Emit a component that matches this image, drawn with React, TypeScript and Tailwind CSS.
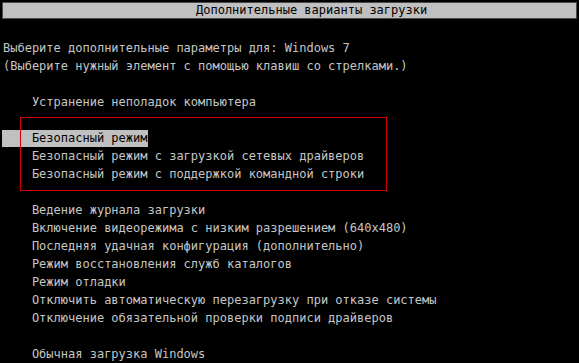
import React from 'react';

const lines: { text: string; selected?: boolean }[] = [
  { text: 'Выберите дополнительные параметры для: Windows 7' },
  { text: '(Выберите нужный элемент с помощью клавиш со стрелками.)' },
  { text: '' },
  { text: '    Устранение неполадок компьютера' },
  { text: '' },
  { text: '    Безопасный режим', selected: true },
  { text: '    Безопасный режим с загрузкой сетевых драйверов' },
  { text: '    Безопасный режим с поддержкой командной строки' },
  { text: '' },
  { text: '    Ведение журнала загрузки' },
  { text: '    Включение видеорежима с низким разрешением (640x480)' },
  { text: '    Последняя удачная конфигурация (дополнительно)' },
  { text: '    Режим восстановления служб каталогов' },
  { text: '    Режим отладки' },
  { text: '    Отключить автоматическую перезагрузку при отказе системы' },
  { text: '    Отключение обязательной проверки подписи драйверов' },
  { text: '' },
  { text: '    Обычная загрузка Windows' },
];

export default function App() {
  return (
    <div className="relative w-[579px] h-[363px] overflow-hidden bg-black text-[#c6c6c6] text-[12px] font-['DejaVu_Sans_Mono','Liberation_Mono',monospace]">
      {/* title bar */}
      <div className="mx-[2px] mt-[2px] h-[17px] bg-[#c0c0c0] border border-[#4a4a4a] text-black leading-[15px] pl-[193px] whitespace-pre">
        Дополнительные варианты загрузки
      </div>

      <div className="mt-[20px] flex flex-col">
        {lines.map((l, i) => (
          <div key={i} className="h-[18px] leading-[18px] pl-[3px] whitespace-pre">
            {l.selected ? (
              <span className="-ml-[1px] pl-[1px] inline-block h-[17px] leading-[17px] bg-[#c0c0c0] text-black">{l.text}</span>
            ) : (
              l.text
            )}
          </div>
        ))}
      </div>

      {/* annotation frame */}
      <div className="absolute left-[20px] top-[117px] w-[367px] h-[74px] border border-[#d40000]" />
    </div>
  );
}
